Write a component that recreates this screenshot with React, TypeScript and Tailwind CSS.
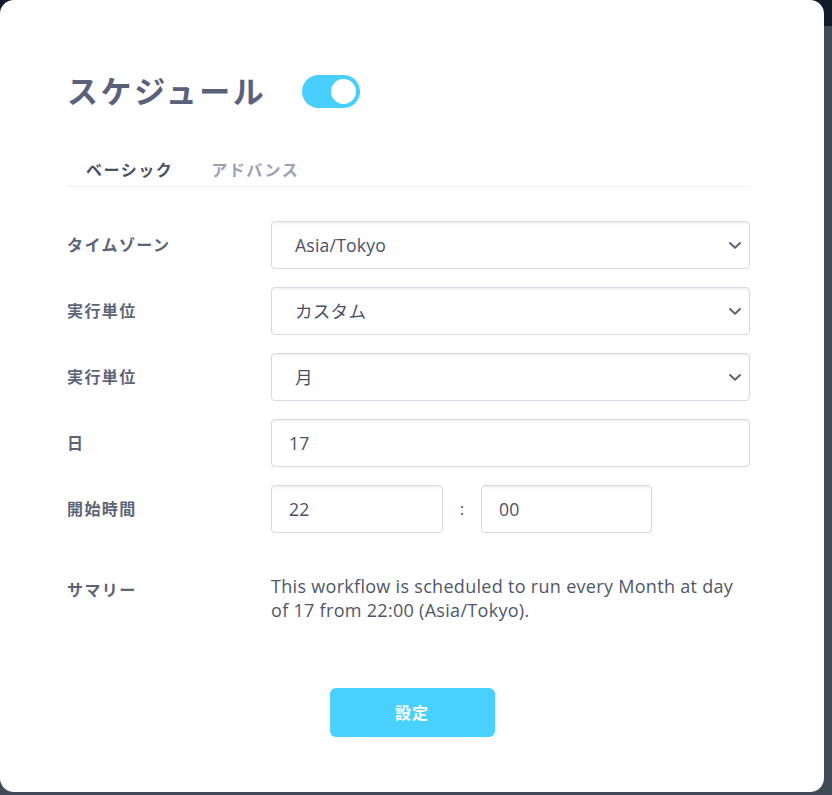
import React, { useState } from 'react';

const font = "font-['Open_Sans','Noto_Sans_CJK_JP',sans-serif]";

const Chevron = () => (
  <svg className="w-[16px] h-[16px] text-[#5d6478]" viewBox="0 0 24 24" fill="none" stroke="currentColor" strokeWidth="3" strokeLinecap="round" strokeLinejoin="round">
    <path d="M4.5 9l7.5 7 7.5-7" />
  </svg>
);

const Field: React.FC<{ value: string; select?: boolean; className?: string }> = ({ value, select, className }) => (
  <div className={`h-[48px] border border-[#d5d9e1] rounded-[4px] bg-white shadow-[inset_0_3px_2px_-1px_rgba(0,0,0,0.05)] flex items-center justify-between pr-[6px] text-[17.6px] text-[#4b516b] tracking-[0.2px] ${select ? 'pl-[23px]' : 'pl-[17px]'} ${className || ''}`}>
    <span>{value}</span>
    {select && <Chevron />}
  </div>
);

const Row: React.FC<{ label: string; children: React.ReactNode }> = ({ label, children }) => (
  <div className="flex items-center">
    <div className="w-[204px] shrink-0 text-[16px] font-semibold text-[#5d6478] tracking-[1.4px]">{label}</div>
    <div className="flex-1">{children}</div>
  </div>
);

export default function App() {
  const [enabled, setEnabled] = useState(true);
  const [tab, setTab] = useState('basic');

  return (
    <div className={`w-[832px] h-[795px] overflow-hidden bg-[linear-gradient(to_bottom,#0f1b2b_0,#0f1b2b_26px,#414b57_26px)] ${font}`}>
      <div className="w-[824px] h-[792px] bg-white rounded-[14px] pl-[67px] pr-[74px] pt-[71px]">
        {/* Title */}
        <div className="flex items-center h-[40px]">
          <h1 className="text-[31px] font-bold text-[#5b607b] tracking-[2.6px]">スケジュール</h1>
          <button
            onClick={() => setEnabled(!enabled)}
            className={`ml-[36px] w-[58px] h-[33px] rounded-full flex items-center px-[4px] ${enabled ? 'bg-[#48cfff] justify-end' : 'bg-gray-300 justify-start'}`}
          >
            <span className="w-[25px] h-[25px] rounded-full bg-white block" />
          </button>
        </div>

        {/* Tabs */}
        <div className="mt-[47px] flex border-b border-[#eef0f3] pb-[4px]">
          <button onClick={() => setTab('basic')} className={`px-[19px] h-[24px] text-[16px] font-bold tracking-[1.5px] ${tab === 'basic' ? 'text-[#4b5068]' : 'text-[#9ba2b6]'}`}>ベーシック</button>
          <button onClick={() => setTab('advanced')} className={`px-[19px] h-[24px] text-[16px] font-bold tracking-[1.5px] ${tab === 'advanced' ? 'text-[#4b5068]' : 'text-[#9ba2b6]'}`}>アドバンス</button>
        </div>

        {/* Form */}
        <div className="mt-[34px] flex flex-col gap-[18px]">
          <Row label="タイムゾーン"><Field value="Asia/Tokyo" select /></Row>
          <Row label="実行単位"><Field value="カスタム" select /></Row>
          <Row label="実行単位"><Field value="月" select /></Row>
          <Row label="日"><Field value="17" /></Row>
          <Row label="開始時間">
            <div className="flex items-center">
              <Field value="22" className="w-[172px]" />
              <span className="w-[38px] text-center text-[17px] text-[#4b516b]">:</span>
              <Field value="00" className="w-[171px]" />
            </div>
          </Row>
        </div>

        {/* Summary */}
        <div className="mt-[41px] flex items-start">
          <div className="w-[204px] shrink-0 text-[16px] font-semibold text-[#5d6478] tracking-[1.4px] pt-[4px]">サマリー</div>
          <p className="flex-1 text-[18px] leading-[24px] text-[#4f566b] tracking-[0.3px]">
            This workflow is scheduled to run every Month at day of 17 from 22:00 (Asia/Tokyo).
          </p>
        </div>

        {/* Submit */}
        <div className="mt-[66px] pl-[7px] flex justify-center">
          <button className="w-[165px] h-[49px] rounded-[6px] bg-[#48d0ff] text-white text-[16px] font-bold tracking-[1px]">設定</button>
        </div>
      </div>
    </div>
  );
}
